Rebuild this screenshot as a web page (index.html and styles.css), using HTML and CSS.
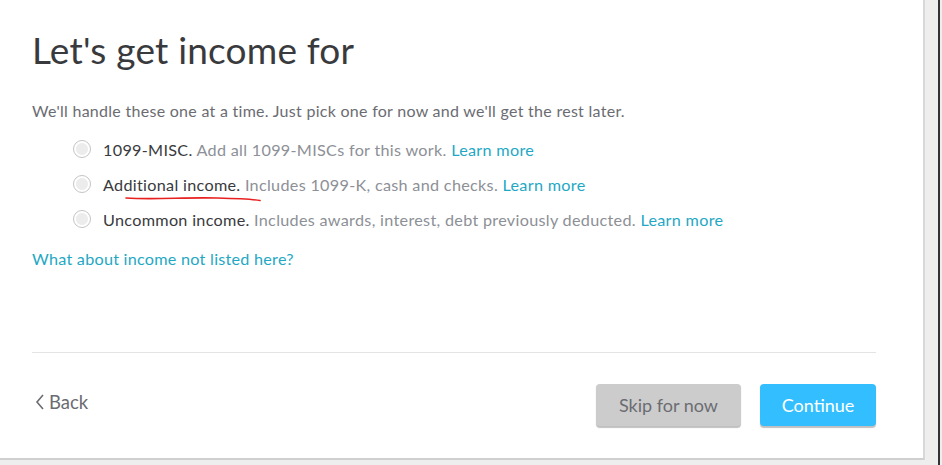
FILE: index.html
```html
<!DOCTYPE html>
<html>
<head>
<meta charset="utf-8">
<link rel="stylesheet" href="styles.css">
</head>
<body>
<div class="page">
  <div class="card">
    <h1 class="title">Let's get income for</h1>
    <p class="intro">We'll handle these one at a time. Just pick one for now and we'll get the rest later.</p>
    <ul class="options">
      <li class="option"><span class="radio"></span><span class="label"><span class="name">1099-MISC.</span> Add all 1099-MISCs for this work. <a class="link">Learn more</a></span></li>
      <li class="option"><span class="radio"></span><span class="label"><span class="name marked">Additional income.<svg class="scribble" width="136" height="8" viewBox="0 0 136 8"><path d="M1 3 C 30 5, 60 2, 92 3 C 112 3.5, 127 4, 135 5.5" fill="none" stroke="#e8201f" stroke-width="1.6" stroke-linecap="round"/></svg></span> Includes 1099-K, cash and checks. <a class="link">Learn more</a></span></li>
      <li class="option"><span class="radio"></span><span class="label"><span class="name">Uncommon income.</span> Includes awards, interest, debt previously deducted. <a class="link">Learn more</a></span></li>
    </ul>
    <a class="link other">What about income not listed here?</a>
    <hr class="divider">
    <div class="footer">
      <a class="back"><svg class="chev" width="10" height="16" viewBox="0 0 10 16"><path d="M8 1 L2 8 L8 15" fill="none" stroke="#6b6c72" stroke-width="1.6"/></svg>Back</a>
      <div class="actions">
        <button class="btn skip">Skip for now</button>
        <button class="btn primary">Continue</button>
      </div>
    </div>
  </div>
  <div class="gutter"></div>
  <div class="edge"></div>
</div>
</body>
</html>
```
FILE: styles.css
```css
html, body {
  margin: 0;
  padding: 0;
}
body {
  width: 942px;
  height: 465px;
  overflow: hidden;
  font-family: "Lato", sans-serif;
  background: #eeeeee;
}
.page {
  display: flex;
  height: 465px;
}
.card {
  width: 925px;
  height: 460px;
  box-sizing: border-box;
  background: #fff;
  border-right: 2px solid #d8d8d8;
  border-bottom: 2px solid #cfcfcf;
  padding: 0 0 0 32px;
  display: flex;
  flex-direction: column;
}
.gutter {
  width: 13px;
  background: #eeeeee;
}
.edge {
  width: 2px;
  background: #333;
}
.title {
  margin: 28px 0 0 0;
  font-size: 37px;
  font-weight: 400;
  color: #393a3d;
  line-height: 44px;
  letter-spacing: 0.2px;
}
.intro {
  margin: 29px 0 0 0;
  font-size: 16px;
  line-height: 20px;
  color: #6b6c72;
  letter-spacing: 0.28px;
}
.options {
  list-style: none;
  margin: 18px 0 0 41px;
  padding: 0;
  display: flex;
  flex-direction: column;
  gap: 15px;
}
.option {
  display: flex;
  align-items: center;
  height: 20px;
  font-size: 16.2px;
  letter-spacing: 0.3px;
  color: #8d9096;
}
.radio {
  width: 16px;
  height: 16px;
  border: 1.5px solid #c4c4c4;
  border-radius: 50%;
  background: radial-gradient(circle, #ececec 0 5.5px, #fff 6.5px);
  margin-right: 12px;
  flex: none;
}
.name {
  color: #393a3d;
}
.marked {
  position: relative;
}
.scribble {
  position: absolute;
  left: 22px;
  top: 20px;
}
.link {
  color: #1fa8c4;
  cursor: pointer;
}
.other {
  margin-top: 20px;
  font-size: 16.2px;
  letter-spacing: 0.25px;
  line-height: 20px;
}
.divider {
  margin: 83px 0 0 0;
  width: 844px;
  border: 0;
  border-top: 1px solid #e3e3e3;
}
.footer {
  width: 844px;
  margin-top: 31px;
  display: flex;
  align-items: center;
  justify-content: space-between;
}
.back {
  display: flex;
  align-items: center;
  gap: 4px;
  font-size: 18.5px;
  color: #6b6c72;
  padding-left: 3px;
  margin-bottom: 6px;
}
.actions {
  display: flex;
  gap: 19px;
}
.btn {
  height: 42px;
  border: 0;
  border-radius: 4px;
  font-family: inherit;
  font-size: 18px;
  padding: 0 8px;
  box-shadow: 0 1.5px 1px rgba(0,0,0,0.25);
}
.skip {
  width: 145px;
  background: #cccccc;
  color: #6b6c72;
}
.primary {
  width: 116px;
  background: #33bfff;
  color: #fff;
}
```
